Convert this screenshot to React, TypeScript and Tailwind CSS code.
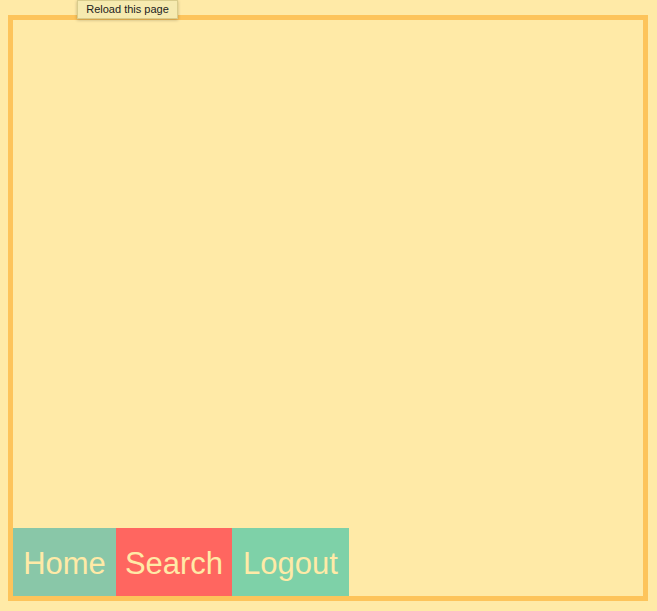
export default function App() {
  return (
    <div className="relative h-[611px] w-[657px] bg-[#ffeaa7] pt-[15px] pl-[8px]" style={{ fontFamily: '"Liberation Sans", Arial, sans-serif' }}>
      <div className="flex h-[586px] w-[640px] flex-col justify-end border-[5px] border-[#fdc45b]">
        <div className="flex h-[68px]">
          <div className="flex w-[103px] items-center justify-center bg-[#89c7a8] pt-[4px] text-[31px] text-[#ffeaa7]">Home</div>
          <div className="flex w-[116px] items-center justify-center bg-[#ff6660] pt-[4px] text-[31px] text-[#ffeaa7]">Search</div>
          <div className="flex w-[117px] items-center justify-center bg-[#7ed1a8] pt-[4px] text-[31px] text-[#ffeaa7]">Logout</div>
        </div>
      </div>
      <div className="absolute left-[77px] top-0 flex h-[19px] w-[101px] items-center justify-center border border-[#d9cc8c] bg-[#f6eab0] text-[11px] text-[#222] shadow-[0_1px_3px_rgba(0,0,0,0.25)]" style={{ fontFamily: '"Liberation Sans", Arial, sans-serif' }}>
        Reload this page
      </div>
    </div>
  );
}
